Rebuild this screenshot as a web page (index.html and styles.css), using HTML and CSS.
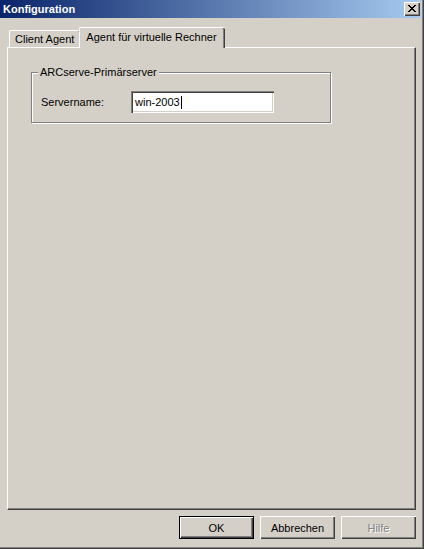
FILE: index.html
```html
<!DOCTYPE html>
<html lang="de">
<head>
<meta charset="utf-8">
<title>Konfiguration</title>
<link rel="stylesheet" href="styles.css">
</head>
<body>
<div class="window">
  <div class="titlebar">
    <span class="title">Konfiguration</span>
    <span class="close"><svg width="8" height="7" viewBox="0 0 8 7"><path d="M0 0h2v1h1v1h2v-1h1v-1h2v1h-1v1h-1v1h-1v1h1v1h1v1h1v1h-2v-1h-1v-1h-2v1h-1v1h-2v-1h1v-1h1v-1h1v-1h-1v-1h-1v-1h-1z" fill="#000"/></svg></span>
  </div>
  <div class="content">
    <div class="tabs">
      <div class="tab">Client Agent</div>
      <div class="tab active">Agent für virtuelle Rechner</div>
    </div>
    <div class="panel">
      <div class="group">
        <div class="group-title">ARCserve-Primärserver</div>
        <div class="row">
          <span class="label">Servername:</span>
          <div class="edit">win-2003<span class="caret"></span></div>
        </div>
      </div>
    </div>
    <div class="buttons">
      <div class="btn default">OK</div>
      <div class="btn">Abbrechen</div>
      <div class="btn disabled">Hilfe</div>
    </div>
  </div>
</div>
</body>
</html>
```
FILE: styles.css
```css
body {
  margin: 0;
  background: #d4d0c8;
  font-family: "Liberation Sans", Arial, sans-serif;
  font-size: 11px;
  color: #000;
}
.window {
  width: 424px;
  height: 549px;
  box-sizing: border-box;
  padding: 0 3px 3px 0;
  background: #d4d0c8;
  box-shadow: inset -1px -1px 0 #404040, inset -2px -2px 0 #808080;
  display: flex;
  flex-direction: column;
}
.titlebar {
  height: 18px;
  flex: none;
  background: linear-gradient(to right, #0a246a, #a6caf0);
  display: flex;
  align-items: center;
  justify-content: space-between;
  padding: 0 1px 0 3px;
}
.title {
  color: #fff;
  font-weight: bold;
}
.close {
  width: 16px;
  height: 14px;
  box-sizing: border-box;
  background: #d4d0c8;
  box-shadow: inset 1px 1px 0 #fff, inset -1px -1px 0 #404040, inset -2px -2px 0 #808080;
  display: flex;
  align-items: center;
  justify-content: center;
  padding: 0 1px 1px 0;
}
.close svg { display: block; }
.content {
  padding: 9px 5px 0 7px;
  display: flex;
  flex-direction: column;
}
.tabs {
  display: flex;
  align-items: flex-end;
  height: 21px;
  margin-bottom: -1px;
  padding-left: 2px;
  position: relative;
  z-index: 1;
}
.tab {
  height: 17px;
  margin-bottom: 1px;
  box-sizing: border-box;
  padding: 0 7px 0 5px;
  border-left: 1px solid #fff;
  border-top: 1px solid #fff;
  border-radius: 2px 2px 0 0;
  box-shadow: inset -1px 0 0 #404040, inset -2px 0 0 #808080;
  background: #d4d0c8;
  display: flex;
  align-items: center;
  white-space: nowrap;
}
.tab.active {
  height: 21px;
  margin-bottom: 0;
  margin-left: -2px;
  padding: 0 8px 2px 6px;
  position: relative;
}
.panel {
  height: 463px;
  box-sizing: border-box;
  border-top: 1px solid #fff;
  border-left: 1px solid #fff;
  border-right: 1px solid #404040;
  border-bottom: 1px solid #404040;
  box-shadow: inset -1px -1px 0 #808080;
  padding: 24px 0 0 23px;
}
.group {
  width: 300px;
  box-sizing: border-box;
  border: 1px solid #808080;
  box-shadow: inset 1px 1px 0 #fff, 1px 1px 0 #fff;
  padding: 0 0 9px 0;
}
.group-title {
  width: fit-content;
  margin: -7px 0 0 6px;
  padding: 0 2px;
  line-height: 13px;
  background: #d4d0c8;
}
.row {
  display: flex;
  align-items: center;
  margin-top: 12px;
  padding-left: 9px;
}
.label {
  width: 90px;
}
.edit {
  width: 143px;
  height: 22px;
  box-sizing: border-box;
  background: #fff;
  box-shadow: inset 1px 1px 0 #808080, inset 2px 2px 0 #404040, inset -1px -1px 0 #fff, inset -2px -2px 0 #d4d0c8;
  padding: 0 4px;
  display: flex;
  align-items: center;
}
.caret {
  display: inline-block;
  width: 1px;
  height: 13px;
  background: #000;
  margin-left: 1px;
}
.buttons {
  display: flex;
  justify-content: flex-end;
  gap: 6px;
  margin-top: 6px;
}
.btn {
  width: 75px;
  height: 23px;
  box-sizing: border-box;
  display: flex;
  align-items: center;
  justify-content: center;
  box-shadow: inset 1px 1px 0 #fff, inset -1px -1px 0 #404040, inset -2px -2px 0 #808080;
}
.btn.default {
  border: 1px solid #000;
  box-shadow: inset 1px 1px 0 #fff, inset -1px -1px 0 #404040, inset -2px -2px 0 #808080;
}
.btn.disabled {
  color: #808080;
  text-shadow: 1px 1px 0 #fff;
}
```
